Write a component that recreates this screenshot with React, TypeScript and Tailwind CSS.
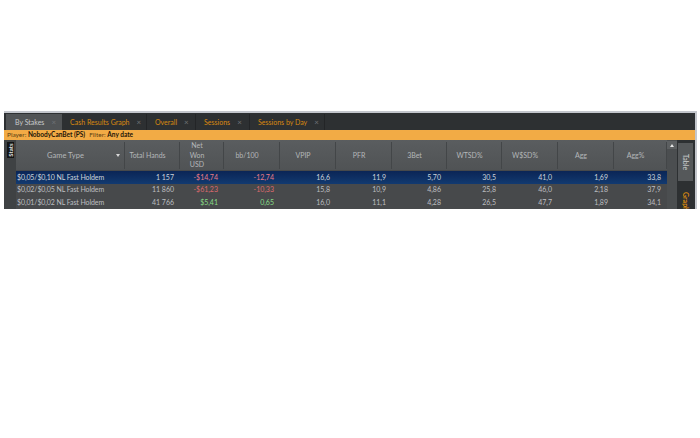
const font = { fontFamily: 'Lato, sans-serif' };

const COLS = 'grid grid-cols-[109px_55px_44px_56px_56px_56px_55px_55px_56px_56px_53px]';

const tabs = ['Cash Results Graph', 'Overall', 'Sessions', 'Sessions by Day'];
const tabWidths = ['w-[85px]', 'w-[49px]', 'w-[54px]', 'w-[75px]'];

const headers = ['Game Type', 'Total Hands', 'Net Won USD', 'bb/100', 'VPIP', 'PFR', '3Bet', 'WTSD%', 'W$SD%', 'Agg', 'Agg%'];

const rows = [
  { game: '$0,05/$0,10 NL Fast Holdem', hands: '1 157', net: '-$14,74', bb: '-12,74', tone: 'text-[#ea7c86]', rest: ['16,6', '11,9', '5,70', '30,5', '41,0', '1,69', '33,8'], selected: true },
  { game: '$0,02/$0,05 NL Fast Holdem', hands: '11 860', net: '-$61,23', bb: '-10,33', tone: 'text-[#dc6a6e]', rest: ['15,8', '10,9', '4,86', '25,8', '46,0', '2,18', '37,9'], selected: false },
  { game: '$0,01/$0,02 NL Fast Holdem', hands: '41 766', net: '$5,41', bb: '0,65', tone: 'text-[#86dc86]', rest: ['16,0', '11,1', '4,28', '26,5', '47,7', '1,89', '34,1'], selected: false },
];

function TabX() {
  return <span className="ml-[7px] text-[8px] leading-none text-[#6f7376]">×</span>;
}

function HeaderCell({ label, index }: { label: string; index: number }) {
  return (
    <div className="relative flex h-[30px] items-center justify-center pr-[10px] pt-[1px] text-center text-[7px] leading-[9.5px] text-[#b4b7b9]">
      <span className={index === 2 ? 'w-[20px]' : index === 0 ? 'text-[7.5px]' : ''}>{label}</span>
      {index === 0 && <span className="absolute right-[5px] top-[14px] h-0 w-0 border-x-[2.5px] border-t-[3px] border-x-transparent border-t-[#d8d8d8]" />}
      <span className="absolute right-0 top-[2px] h-[27px] w-[1px] bg-[#434648]" />
    </div>
  );
}

function Row({ row }: { row: (typeof rows)[number] }) {
  const base = row.selected ? 'bg-gradient-to-b from-[#0b2556] to-[#123a70] text-[#cdd3da]' : 'text-[#bcbec0]';
  return (
    <div className={`${COLS} h-[12.5px] items-center text-[7px] leading-none ${base}`}>
      <div className="whitespace-nowrap pl-[1px] tracking-[-0.1px]">{row.game}</div>
      <div className="pr-[6px] text-right">{row.hands}</div>
      <div className={`pr-[6px] text-right ${row.tone}`}>{row.net}</div>
      <div className={`pr-[6px] text-right ${row.tone}`}>{row.bb}</div>
      {row.rest.map((v, i) => (
        <div key={i} className="pr-[6px] text-right">{v}</div>
      ))}
    </div>
  );
}

export default function App() {
  return (
    <div className="h-[438px] w-[700px] overflow-hidden bg-white pt-[111px]" style={font}>
      <div className="ml-[4px] flex h-[98px] w-[693px] flex-col border-t-2 border-r-2 border-[#c3c6cc] bg-[#47494b]">
        <div className="flex h-[17px] items-end bg-[#2d3032] pl-[2px]">
          <div className="flex h-[16px] w-[56px] items-center bg-[#515456] pl-[9px] text-[7px] text-[#c8cacb]">
            <span>By Stakes</span>
            <TabX />
          </div>
          {tabs.map((t, i) => (
            <div key={t} className={`flex h-[16px] ${tabWidths[i]} items-center whitespace-nowrap border-r border-[#232527] pl-[8px] text-[7px] text-[#d9890f]`}>
              <span>{t}</span>
              <TabX />
            </div>
          ))}
        </div>

        <div className="flex h-[10px] items-center gap-[4px] bg-[#f2ab45] pl-[3px] text-[6.5px] leading-none text-[#5a3e12]">
          <span>Player: <b className="font-bold text-[#1c1408]">NobodyCanBet (PS)</b></span>
          <span>Filter: <b className="font-bold text-[#1c1408]">Any date</b></span>
        </div>

        <div className="flex min-h-0 flex-1 overflow-hidden">
          <div className="w-[12px] shrink-0 bg-[#3f4244] pl-[3px] pt-[2px]">
            <div className="flex h-[16px] w-[7px] items-center justify-center bg-[#141516]">
              <span className="-rotate-90 text-[6px] font-bold leading-none text-[#e4e4e4]">Stats</span>
            </div>
          </div>
          <div className="w-[651px] shrink-0">
            <div className={`${COLS} bg-gradient-to-b from-[#5a5d5f] to-[#505355]`}>
              {headers.map((h, i) => (
                <HeaderCell key={h} label={h} index={i} />
              ))}
            </div>
            <div className="mt-[1px]">
              {rows.map((r) => (
                <Row key={r.game} row={r} />
              ))}
            </div>
          </div>
          <div className="flex w-[10px] shrink-0 flex-col bg-[#4b4e50]">
            <div className="mt-[1px] flex h-[8px] items-center justify-center bg-[#5c5f61]">
              <span className="h-0 w-0 border-x-[2.5px] border-b-[3px] border-x-transparent border-b-[#e6e6e6]" />
            </div>
          </div>
          <div className="flex min-w-0 flex-1 flex-col bg-[#2d3032] pl-[1px] pt-[3px]">
            <div className="flex h-[38px] w-[15px] shrink-0 items-center justify-center bg-[#55585a]">
              <span className="text-[7px] leading-none text-[#cfd1d2] [writing-mode:vertical-rl]">Table</span>
            </div>
            <div className="mt-[4px] flex w-[15px] flex-1 justify-center overflow-hidden pt-[7px]">
              <span className="whitespace-nowrap text-[7px] font-bold leading-none text-[#d9890f] [writing-mode:vertical-rl]">Graph</span>
            </div>
          </div>
        </div>
      </div>
    </div>
  );
}
